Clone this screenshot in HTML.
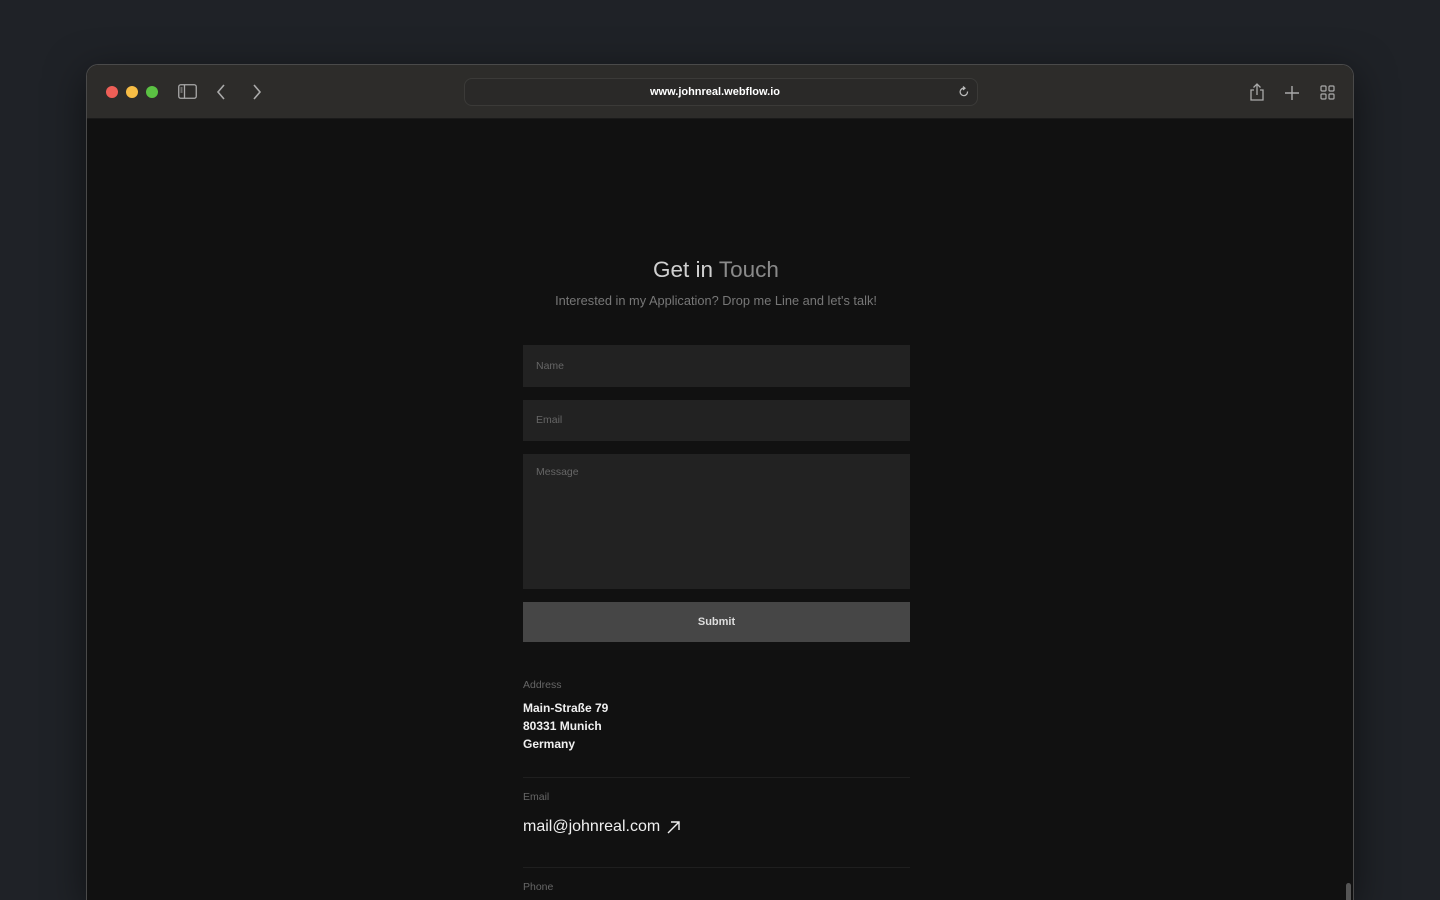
<!DOCTYPE html>
<html><head><meta charset="utf-8"><style>
*{margin:0;padding:0;box-sizing:border-box}
html,body{width:1440px;height:900px;overflow:hidden;background:#1f2227;font-family:"Liberation Sans",sans-serif}
.win{position:absolute;left:86px;top:64px;width:1268px;height:836px;border-radius:12px 12px 0 0;border:1px solid #4a4a4a;border-bottom:none;background:#111111;overflow:hidden;box-shadow:0 10px 40px rgba(0,0,0,.5)}
.bar{position:absolute;left:0;top:0;width:100%;height:54px;background:#2d2c2a;border-bottom:1px solid #1a1a1a}
.dot{position:absolute;top:21px;width:12px;height:12px;border-radius:50%}
.url{position:absolute;left:377px;top:13px;width:514px;height:28px;border:1px solid #3b3a38;border-radius:8px;background:#2a2928;color:#fff;font-size:11px;font-weight:bold;text-align:center;line-height:26px;padding-right:12px}
svg{position:absolute}
.c{position:absolute;left:436px;width:387px}
h1{position:absolute;left:0;width:1258px;top:192px;text-align:center;font-weight:normal;font-size:22.5px;color:#d0d0d0}
.sub{position:absolute;left:0;width:1258px;top:228px;text-align:center;font-size:12.8px;color:#777}
.in{background:#222222;color:#666;font-size:10.5px;padding-left:13px}
.lbl{color:#666;font-size:10.5px}
.val{color:#f0f0f0;font-size:12px;font-weight:bold;line-height:18px}
.hr{position:absolute;left:436px;width:387px;height:1px;background:#1f1f1f}
</style></head><body>
<div class="win">
 <div class="bar">
  <div class="dot" style="left:19px;background:#ee5f57"></div>
  <div class="dot" style="left:39px;background:#f7bd45"></div>
  <div class="dot" style="left:59px;background:#5bc243"></div>
  <svg style="left:91px;top:19px" width="19" height="15" viewBox="0 0 19 15"><rect x="0.75" y="0.75" width="17.5" height="13.5" rx="2" fill="none" stroke="#aaa" stroke-width="1.3"/><line x1="6.5" y1="1" x2="6.5" y2="14" stroke="#aaa" stroke-width="1.3"/><line x1="2.5" y1="4" x2="4.5" y2="4" stroke="#aaa"/><line x1="2.5" y1="6" x2="4.5" y2="6" stroke="#aaa"/><line x1="2.5" y1="8" x2="4.5" y2="8" stroke="#aaa"/></svg>
  <svg style="left:129px;top:19px" width="10" height="16" viewBox="0 0 10 16"><path d="M8 1L2 8l6 7" fill="none" stroke="#aaa" stroke-width="1.6"/></svg>
  <svg style="left:165px;top:19px" width="10" height="16" viewBox="0 0 10 16"><path d="M2 1l6 7-6 7" fill="none" stroke="#aaa" stroke-width="1.6"/></svg>
  <div class="url">www.johnreal.webflow.io</div>
  <svg style="left:871px;top:21px" width="12" height="12" viewBox="0 0 12 12"><path d="M9.5 5.5A3.7 3.7 0 1 1 6 2.2" fill="none" stroke="#bbb" stroke-width="1.3"/><path d="M5 0.5l2 1.7-2 1.7" fill="none" stroke="#bbb" stroke-width="1.2"/></svg>
  <svg style="left:1162px;top:18px" width="16" height="19" viewBox="0 0 16 19"><path d="M5 7H2v10h12V7h-3" fill="none" stroke="#aaa" stroke-width="1.3"/><path d="M8 12V1M4.5 4.5L8 1l3.5 3.5" fill="none" stroke="#aaa" stroke-width="1.3"/></svg>
  <svg style="left:1198px;top:21px" width="14" height="14" viewBox="0 0 14 14"><path d="M7 0v14M0 7h14" stroke="#aaa" stroke-width="1.4"/></svg>
  <svg style="left:1233px;top:20px" width="15" height="15" viewBox="0 0 15 15" fill="none" stroke="#aaa" stroke-width="1.2"><rect x="1" y="1" width="5" height="5" rx="1"/><rect x="9" y="1" width="5" height="5" rx="1"/><rect x="1" y="9" width="5" height="5" rx="1"/><rect x="9" y="9" width="5" height="5" rx="1"/></svg>
 </div>
 <h1>Get in <span style="color:#8a8a8a">Touch</span></h1>
 <div class="sub">Interested in my Application? Drop me Line and let's talk!</div>
 <div class="c in" style="top:280px;height:42px;line-height:42px">Name</div>
 <div class="c in" style="top:335px;height:41px;line-height:41px">Email</div>
 <div class="c in" style="top:389px;height:135px;padding-top:12px">Message</div>
 <div class="c" style="top:537px;height:40px;background:#464646;color:#ddd;font-size:11px;font-weight:bold;text-align:center;line-height:40px">Submit</div>
 <div class="c lbl" style="top:614px">Address</div>
 <div class="c val" style="top:634px">Main-Straße 79<br>80331 Munich<br>Germany</div>
 <div class="hr" style="top:712px"></div>
 <div class="c lbl" style="top:726px">Email</div>
 <div class="c" style="top:753px;color:#f0f0f0;font-size:16px">mail@johnreal.com
  <svg style="left:144px;top:3px" width="13" height="13" viewBox="0 0 13 13"><path d="M1 12L12 1M4 1h8v8" fill="none" stroke="#eee" stroke-width="1.4"/></svg></div>
 <div class="hr" style="top:802px"></div>
 <div class="c lbl" style="top:816px">Phone</div>
 <div style="position:absolute;left:1259px;top:818px;width:5px;height:30px;border-radius:3px;background:#555"></div>
</div>
</body></html>
